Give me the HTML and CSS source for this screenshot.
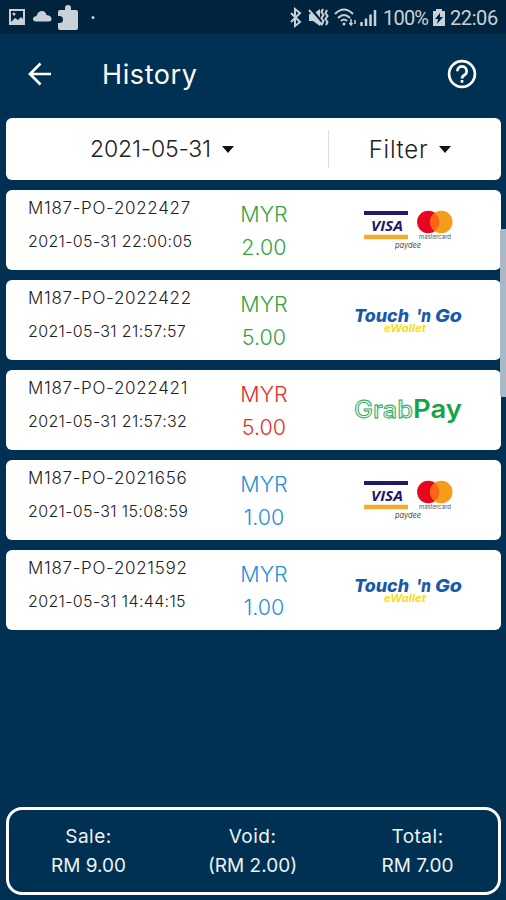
FILE: index.html
```html
<!DOCTYPE html>
<html lang="en">
<head>
    <meta charset="UTF-8">
    <meta name="viewport" content="width=device-width, initial-scale=1.0">
    <title>History</title>
    <link rel="stylesheet" href="styles.css">
</head>
<body>
    <!-- Shared logos -->
    <svg class="defs" width="0" height="0">
        <symbol id="cards" viewBox="0 0 110 60">
            <path fill="#211a67" d="M11 11h44v4H11z"/>
            <path fill="#f0ac31" d="M11 34.700h44v4.500H11z"/>
            <text x="18" y="30.500" textLength="32" lengthAdjust="spacingAndGlyphs" class="visa">VISA</text>
            <circle cx="75.300" cy="22" r="11.200" fill="#e8051d"/>
            <circle cx="88.300" cy="22" r="11.200" fill="#f59c1b"/>
            <path fill="#fa6418" d="M81.800 12.900a11.200 11.200 0 0 1 0 18.200a11.200 11.200 0 0 1 0-18.200z"/>
            <text x="66" y="38.700" textLength="32" lengthAdjust="spacingAndGlyphs" class="mastercard">mastercard</text>
            <text x="42" y="47.500" textLength="26" lengthAdjust="spacingAndGlyphs" class="paydee">paydee</text>
        </symbol>
        <symbol id="tng" viewBox="0 0 110 60">
            <text x="1" y="31.500" textLength="55" lengthAdjust="spacingAndGlyphs" class="touch">Touch</text>
            <text x="63" y="31.500" textLength="15" lengthAdjust="spacingAndGlyphs" class="touch">'n</text>
            <text x="82" y="31.500" textLength="27" lengthAdjust="spacingAndGlyphs" class="touch">Go</text>
            <text x="31" y="41.500" textLength="42" lengthAdjust="spacingAndGlyphs" class="ewallet">eWallet</text>
        </symbol>
        <symbol id="grab" viewBox="0 0 110 60">
            <text x="1" y="37.500" textLength="59" lengthAdjust="spacingAndGlyphs" class="grab">Grab</text>
            <text x="60" y="37.500" textLength="49" lengthAdjust="spacingAndGlyphs" class="pay">Pay</text>
        </symbol>
    </svg>

    <div class="statusbar">
        <svg class="status-left" width="100" height="34" viewBox="0 0 100 34" fill="#c8d1d8">
            <path fill-rule="evenodd" d="M9 9h16v16H9zM11 11v11l4-4 3 2 3-3 2 2v-8z"/>
            <circle cx="14" cy="14" r="1.500"/>
            <path d="M36 21.500q-3 0-3-2.500 0-2.500 3.500-3 1.500-5 5.500-5 3.500 0 4.500 4 5 .5 5 4 0 2.500-2.500 2.500z"/>
            <path d="M60 10h5V8a3 3 0 0 1 6 0v2h5q2 0 2 2v16q0 2-2 2H60q-2 0-2-2v-5h1.500a3.500 3.500 0 0 0 0-7H58v-4q0-2 2-2z"/>
            <circle cx="93" cy="17.500" r="1.500"/>
        </svg>
        <div class="status-right">
            <svg width="90" height="34" viewBox="0 0 90 34" fill="none" stroke="#c8d1d8" stroke-width="2">
                <path d="M2 13l9 9-5 4V9l5 4-9 9"/>
                <path fill="#c8d1d8" stroke="none" d="M20 14h4l7-5v17l-7-5h-4z"/>
                <path stroke="#00243d" stroke-width="3" d="M22 9l12 15"/>
                <path d="M20 10l13 15M34 9l-1.500 3 2 3-2 3 2 3-2 4M38 10l-1.500 3 2 3-2 3 2 3-1.500 3"/>
                <path d="M46 14q9-9 18 0M49 18q6-6 12 0M52 21q3-3 6 0"/>
                <circle cx="55" cy="24" r="1.500" fill="#c8d1d8" stroke="none"/>
                <path stroke-width="1.500" d="M62 19v6M60.500 23l1.500 2 1.500-2M66 20v4"/>
                <path stroke-width="2.500" d="M72.500 22v4M77 18.500V26M81.500 14.500V26M86 10v16"/>
            </svg>
            <span class="battery-text">100%</span>
            <svg class="battery" width="14" height="34" viewBox="0 0 14 34">
                <path fill="#c8d1d8" d="M4 9h6v2h3v15H1V11h3z"/>
                <path fill="#00243d" d="M8 13l-5 6h3l-1 5 6-7H8z"/>
            </svg>
            <span class="clock">22:06</span>
        </div>
    </div>

    <div class="appbar">
        <svg class="back" width="24" height="24" viewBox="0 0 24 24" fill="none" stroke="#fff" stroke-width="2.700">
            <path d="M23 12H2M12.500 1.500L2 12l10.500 10.500"/>
        </svg>
        <h1>History</h1>
        <svg class="help" width="30" height="30" viewBox="0 0 30 30" fill="none" stroke="#fff" stroke-width="2.700">
            <circle cx="15" cy="15" r="12.900"/>
            <path d="M10.300 12.300a4.700 4.700 0 1 1 7.600 3.500q-2.900 1.600-2.900 3.600"/>
            <path d="M15 21v2.700"/>
        </svg>
    </div>

    <div class="card filters">
        <div class="filter-date"><span class="date-value">2021-05-31</span><i class="caret"></i></div>
        <div class="filter-type"><span class="type-value">Filter</span><i class="caret"></i></div>
    </div>

    <div class="list">
        <div class="card row">
            <div class="info"><p class="order">M187-PO-2022427</p><p class="time">2021-05-31 22:00:05</p></div>
            <div class="amount green"><p>MYR</p><p class="value">2.00</p></div>
            <svg class="logo"><use href="#cards"/></svg>
        </div>
        <div class="card row">
            <div class="info"><p class="order">M187-PO-2022422</p><p class="time">2021-05-31 21:57:57</p></div>
            <div class="amount green"><p>MYR</p><p class="value">5.00</p></div>
            <svg class="logo"><use href="#tng"/></svg>
        </div>
        <div class="card row">
            <div class="info"><p class="order">M187-PO-2022421</p><p class="time">2021-05-31 21:57:32</p></div>
            <div class="amount red"><p>MYR</p><p class="value">5.00</p></div>
            <svg class="logo"><use href="#grab"/></svg>
        </div>
        <div class="card row">
            <div class="info"><p class="order">M187-PO-2021656</p><p class="time">2021-05-31 15:08:59</p></div>
            <div class="amount blue"><p>MYR</p><p class="value">1.00</p></div>
            <svg class="logo"><use href="#cards"/></svg>
        </div>
        <div class="card row">
            <div class="info"><p class="order">M187-PO-2021592</p><p class="time">2021-05-31 14:44:15</p></div>
            <div class="amount blue"><p>MYR</p><p class="value">1.00</p></div>
            <svg class="logo"><use href="#tng"/></svg>
        </div>
    </div>

    <div class="summary">
        <div><p class="label">Sale:</p><p>RM 9.00</p></div>
        <div><p class="label">Void:</p><p>(RM 2.00)</p></div>
        <div><p class="label">Total:</p><p>RM 7.00</p></div>
    </div>

    <div class="scrollbar"></div>
</body>
</html>
```
FILE: styles.css
```css
* {
    box-sizing: border-box;
}

body {
    position: relative;
    margin: 0;
    height: 900px;
    display: flex;
    flex-direction: column;
    overflow: hidden;
    background: #003152;
    font-family: Inter, "Open Sans", sans-serif;
    color: #222;
}

p, h1 {
    margin: 0;
    white-space: nowrap;
}

.defs {
    display: none;
}

/* Status bar */
.statusbar {
    height: 34px;
    display: flex;
    justify-content: space-between;
    background: #00243d;
    color: #c8d1d8;
    font-family: Roboto, sans-serif;
    font-size: 20px;
    line-height: 36px;
}

.status-right {
    display: flex;
    padding-right: 8px;
}

.battery-text {
    width: 49px;
    margin-left: 4px;
    letter-spacing: -0.8px;
}

.clock {
    width: 48px;
    margin-left: 4px;
    letter-spacing: -0.4px;
}

/* App bar */
.appbar {
    height: 84px;
    padding: 0 29px 4px 28px;
    display: flex;
    align-items: center;
    color: #fff;
}

.appbar h1 {
    margin-left: 50px;
    font-size: 27px;
    font-weight: 400;
    letter-spacing: 0.6px;
}

.help {
    margin-left: auto;
}

.card {
    background: #fff;
    border-radius: 6px;
}

/* Filters */
.filters {
    height: 62px;
    margin: 0 5px 10px 6px;
    display: flex;
    align-items: center;
    font-size: 23px;
    font-weight: 300;
}

.filter-date, .filter-type {
    height: 38px;
    display: flex;
    align-items: center;
    justify-content: center;
    gap: 11px;
}

.filter-date {
    width: 323px;
    padding-right: 10px;
    border-right: 1px solid #ddd;
}

.date-value {
    letter-spacing: -0.2px;
}

.filter-type {
    flex: 1;
    padding-right: 10px;
}

.type-value {
    font-size: 24px;
    letter-spacing: 0.7px;
}

.caret {
    border: 6.5px solid transparent;
    border-top: 7px solid #111;
    border-bottom: 0;
}

/* Transactions */
.list {
    margin: 0 5px 0 6px;
    display: flex;
    flex-direction: column;
    gap: 10px;
}

.row {
    height: 80px;
    display: grid;
    grid-template-columns: 194px 128px 1fr;
}

.info {
    padding: 2px 0 0 22px;
    font-weight: 300;
    line-height: 33px;
}

.order {
    font-size: 17px;
    letter-spacing: 0.7px;
}

.time {
    font-size: 16px;
    letter-spacing: 0.35px;
}

.amount {
    padding-top: 8px;
    font-size: 21.5px;
    font-weight: 300;
    line-height: 33px;
    text-align: center;
}

.green { color: #36a342; }
.red { color: #e62e2b; }
.blue { color: #2590dd; }

.logo {
    width: 110px;
    height: 60px;
    margin: 10px 0 0 25px;
}

.visa {
    font: italic 700 15px "Open Sans", sans-serif;
    fill: #211a67;
}

.mastercard {
    font: 5.5px Inter, sans-serif;
    fill: #555;
}

.paydee {
    font: italic 7.5px Inter, sans-serif;
    fill: #444;
}

.touch {
    font: italic 800 18px Inter, sans-serif;
    fill: #1859aa;
}

.ewallet {
    font: italic 700 10.5px Inter, sans-serif;
    fill: #f6dc24;
}

.grab {
    font: 500 24px Inter, sans-serif;
    fill: #d9f0e0;
    stroke: #21a650;
    stroke-width: 0.8px;
}

.pay {
    font: 600 25px Inter, sans-serif;
    fill: #16a34a;
}

/* Totals */
.summary {
    height: 88px;
    margin: auto 5px 5px 6px;
    padding-top: 12px;
    display: grid;
    grid-template-columns: 159px 1fr 161px;
    border: 3px solid #fff;
    border-radius: 16px;
    color: #eef2f5;
    font-size: 19px;
    line-height: 29px;
    text-align: center;
}

.label {
    letter-spacing: 0.5px;
}

.scrollbar {
    position: absolute;
    top: 229px;
    right: 0;
    width: 6px;
    height: 168px;
    border-radius: 3px 0 0 3px;
    background: #a9b9c6;
}
```
